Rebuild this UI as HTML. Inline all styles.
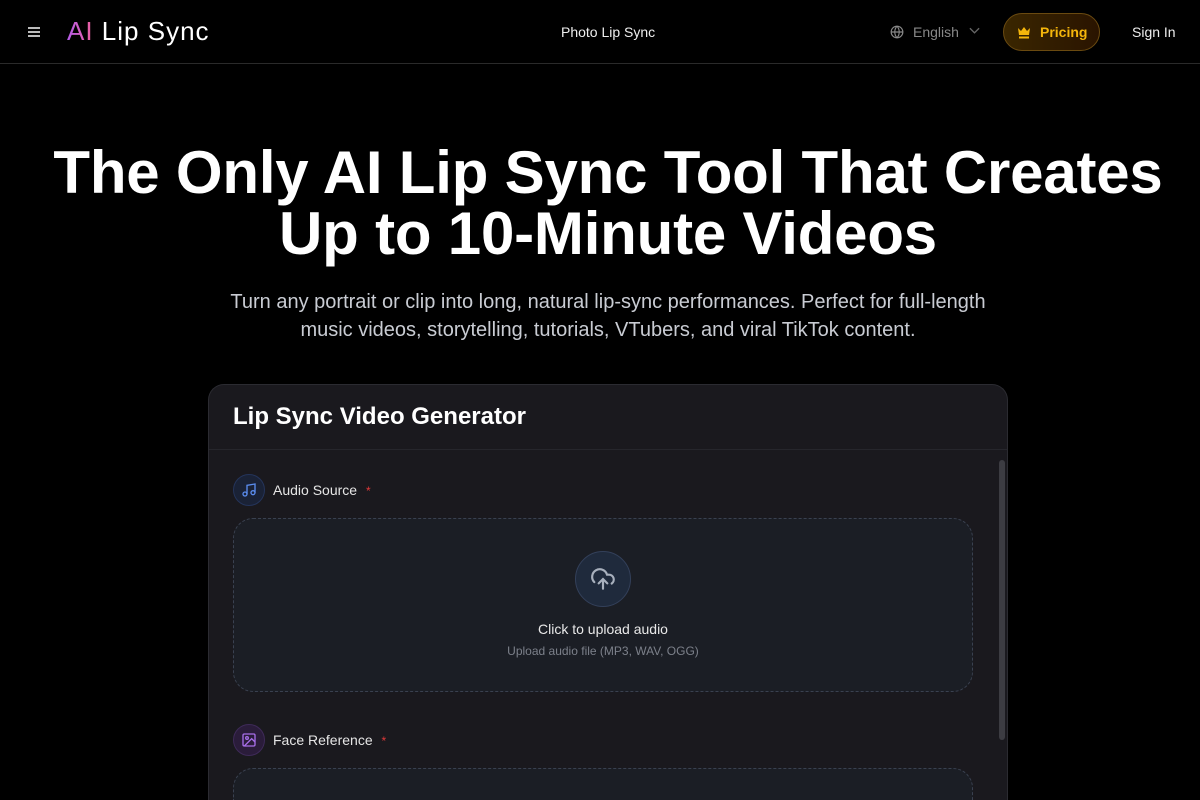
<!DOCTYPE html>
<html style="width:1200px;height:800px;overflow:hidden"><head><meta charset="utf-8"><style>
*{box-sizing:border-box;margin:0;padding:0}
body{width:1200px;height:800px;overflow:hidden;background:#000;font-family:"Liberation Sans",sans-serif;color:#fff;position:relative}
.hdr{position:absolute;left:0;top:0;width:1200px;height:64px;border-bottom:1px solid #2a2a2a}
.abs{position:absolute}
h1{position:absolute;left:0;width:1216px;top:142px;text-align:center;font-size:60px;line-height:61px;font-weight:700;letter-spacing:-0.2px}
.sub{position:absolute;left:0;width:1216px;top:288px;text-align:center;font-size:20px;line-height:28px;color:#c9ccd3}
.card{position:absolute;left:208px;top:384px;width:800px;height:416px;background:#1a191e;border:1px solid #2b2b31;border-bottom:none;border-radius:16px 16px 0 0}
.drop{position:absolute;left:233px;width:740px;border:1px dashed #3a4150;border-radius:20px;background:#1b1e25}
.ic{position:absolute;width:32px;height:32px;border-radius:50%}
</style></head><body>
<div class="hdr">
 <div class="abs" style="left:28px;top:27px;width:12px;height:2px;background:#bbb;box-shadow:0 4px 0 #bbb,0 8px 0 #bbb"></div>
 <div class="abs" style="left:67px;top:17px;font-size:26px;line-height:28px;letter-spacing:1px"><span style="background:linear-gradient(90deg,#b45ce8,#f0609a);-webkit-background-clip:text;color:transparent">AI</span> Lip Sync</div>
 <div class="abs" style="left:561px;top:24px;font-size:14px;color:#eee">Photo Lip Sync</div>
 <svg class="abs" style="left:890px;top:25px" width="14" height="14" viewBox="0 0 24 24" fill="none" stroke="#888" stroke-width="2"><circle cx="12" cy="12" r="10"/><path d="M2 12h20M12 2a15 15 0 0 1 0 20M12 2a15 15 0 0 0 0 20"/></svg>
 <div class="abs" style="left:913px;top:24px;font-size:14px;color:#888">English</div>
 <svg class="abs" style="left:969px;top:27px" width="11" height="8" viewBox="0 0 12 8" fill="none" stroke="#666" stroke-width="1.5"><path d="M1 1l5 5 5-5"/></svg>
 <div class="abs" style="left:1003px;top:13px;width:97px;height:38px;border-radius:19px;border:1px solid #6a4a10;background:linear-gradient(90deg,#3a2600,#2a1400)"></div>
 <svg class="abs" style="left:1017px;top:26px" width="14" height="13" viewBox="0 0 14 13" fill="#f5b60b"><path d="M1 2l3 3 3-4 3 4 3-3-1 7H2z"/><rect x="2" y="10.5" width="10" height="2"/></svg>
 <div class="abs" style="left:1040px;top:24px;font-size:14px;font-weight:700;color:#f5b60b">Pricing</div>
 <div class="abs" style="left:1132px;top:24px;font-size:14px;color:#eee">Sign In</div>
</div>
<h1>The Only AI Lip Sync Tool That Creates<br>Up to 10-Minute Videos</h1>
<div class="sub">Turn any portrait or clip into long, natural lip-sync performances. Perfect for full-length<br>music videos, storytelling, tutorials, VTubers, and viral TikTok content.</div>
<div class="card">
 <div class="abs" style="left:24px;top:18px;font-size:24px;font-weight:700">Lip Sync Video Generator</div>
 <div class="abs" style="left:0;top:64px;width:798px;height:1px;background:#26262c"></div>
 <div class="abs" style="left:790px;top:75px;width:6px;height:280px;background:#3c3c42;border-radius:3px"></div>
</div>
<div class="ic" style="left:233px;top:474px;background:#1a2236;border:1px solid #24345a"></div>
<svg class="abs" style="left:241px;top:482px" width="16" height="16" viewBox="0 0 24 24" fill="none" stroke="#5b8def" stroke-width="2"><path d="M9 18V5l12-2v13"/><circle cx="6" cy="18" r="3"/><circle cx="18" cy="16" r="3"/></svg>
<div class="abs" style="left:273px;top:482px;font-size:14px;color:#e5e5e5">Audio Source <span style="color:#e03a3a;margin-left:5px;font-size:12px">*</span></div>
<div class="drop" style="top:518px;height:174px"></div>
<div class="abs" style="left:575px;top:551px;width:56px;height:56px;border-radius:50%;background:#1f2a3c;border:1px solid #33405a"></div>
<svg class="abs" style="left:590px;top:566px" width="26" height="26" viewBox="0 0 24 24" fill="none" stroke="#a8b0bd" stroke-width="2" stroke-linecap="round"><path d="M4 14.9A7 7 0 1 1 15.7 8h1.8a4.5 4.5 0 0 1 2.5 8.2"/><path d="M12 12v9M8 16l4-4 4 4"/></svg>
<div class="abs" style="left:0;width:1206px;top:621px;text-align:center;font-size:14px;color:#e8e8e8">Click to upload audio</div>
<div class="abs" style="left:0;width:1206px;top:644px;text-align:center;font-size:12px;color:#7c808a">Upload audio file (MP3, WAV, OGG)</div>
<div class="ic" style="left:233px;top:724px;background:#2a1c3a;border:1px solid #3e2a58"></div>
<svg class="abs" style="left:241px;top:732px" width="16" height="16" viewBox="0 0 24 24" fill="none" stroke="#a66ee8" stroke-width="2"><rect x="3" y="3" width="18" height="18" rx="2"/><circle cx="9" cy="9" r="2"/><path d="M21 15l-5-5L5 21"/></svg>
<div class="abs" style="left:273px;top:732px;font-size:14px;color:#e5e5e5">Face Reference <span style="color:#e03a3a;margin-left:5px;font-size:12px">*</span></div>
<div class="drop" style="top:768px;height:32px;border-bottom:none;border-radius:20px 20px 0 0"></div>
</body></html>
